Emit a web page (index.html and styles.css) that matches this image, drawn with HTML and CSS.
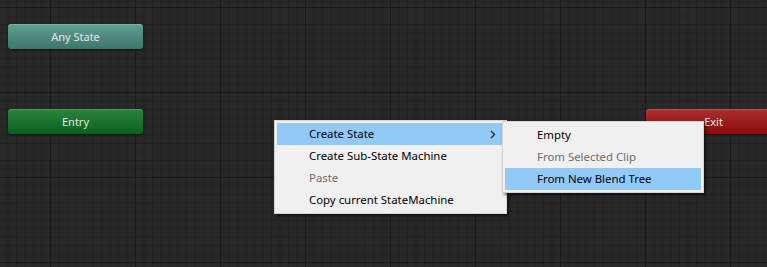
FILE: index.html
```html
<!DOCTYPE html>
<html lang="en">
	<head>
		<meta charset="UTF-8" />
		<title>Animator</title>
		<link rel="stylesheet" href="styles.css">
	</head>
	<body>
		<div id="graph">
			<div class="node node-any">Any State</div>
			<div class="node node-entry">Entry</div>
			<div class="node node-exit">Exit</div>

			<div class="menu menu-main">
				<div class="menu-item active">
					<span>Create State</span>
					<span class="arrow">
						<svg width="6" height="9" viewBox="0 0 6 9"><path d="M1 1 L4.5 4.5 L1 8" fill="none" stroke="#222" stroke-width="1.3"/></svg>
					</span>
				</div>
				<div class="menu-item">Create Sub-State Machine</div>
				<div class="menu-item disabled">Paste</div>
				<div class="menu-item">Copy current StateMachine</div>
			</div>

			<div class="menu menu-sub">
				<div class="menu-item">Empty</div>
				<div class="menu-item disabled">From Selected Clip</div>
				<div class="menu-item active">From New Blend Tree</div>
			</div>
		</div>
	</body>
</html>
```

FILE: styles.css
```css
:root {
	--grid-bg: #282828;
	--grid-minor: #222;
	--grid-major: #1a1a1a;
	--menu-bg: #f0f0f0;
	--menu-border: #d4d4d4;
	--menu-hover: #91c9f7;
	--menu-disabled: #6d6d6d;
}
body {
	margin: 0;
	padding: 0;
	background-color: var(--grid-bg);
	overflow: hidden;
}
#graph {
	position: relative;
	width: 767px;
	height: 267px;
	background-color: var(--grid-bg);
	background-image:
		linear-gradient(to right, var(--grid-major) 1px, transparent 1px),
		linear-gradient(to bottom, var(--grid-major) 1px, transparent 1px),
		linear-gradient(to right, var(--grid-minor) 1px, transparent 1px),
		linear-gradient(to bottom, var(--grid-minor) 1px, transparent 1px);
	background-size: 85px 85px, 85px 85px, 8.5px 8.5px, 8.5px 8.5px;
	background-position: 50px 7px, 50px 7px, 50px 7px, 50px 7px;
	font-family: "Noto Sans", "Open Sans", sans-serif;
}
.node {
	position: absolute;
	width: 135px;
	height: 24px;
	line-height: 23px;
	border-radius: 3px;
	text-align: center;
	font-size: 11px;
	color: #e6e6e6;
	box-shadow: 0 1px 2px rgba(0, 0, 0, 0.5);
}
.node-any {
	left: 8px;
	top: 24px;
	background: linear-gradient(#5f9f8f, #3c766a);
	border-top: 1px solid #7ab4a6;
}
.node-entry {
	left: 8px;
	top: 109px;
	background: linear-gradient(#2b823c, #07621f);
	border-top: 1px solid #4a9a5a;
}
.node-exit {
	left: 646px;
	top: 109px;
	background: linear-gradient(#a82e2e, #8c0a0a);
	border-top: 1px solid #c05050;
}
.menu {
	position: absolute;
	box-sizing: border-box;
	padding: 2px;
	background-color: var(--menu-bg);
	border: 1px solid var(--menu-border);
	box-shadow: 2px 2px 3px rgba(0, 0, 0, 0.55);
	font-size: 11.4px;
	color: #000;
}
.menu-main {
	left: 274px;
	top: 120px;
	width: 233px;
}
.menu-sub {
	left: 502px;
	top: 121px;
	width: 202px;
}
.menu-item {
	display: flex;
	align-items: center;
	justify-content: space-between;
	box-sizing: border-box;
	height: 22px;
	padding: 0 8px 2px 32px;
	white-space: nowrap;
}
.menu-item.active {
	background-color: var(--menu-hover);
}
.menu-item.disabled {
	color: var(--menu-disabled);
}
.arrow {
	display: flex;
	align-items: center;
	padding-top: 2px;
}
```
